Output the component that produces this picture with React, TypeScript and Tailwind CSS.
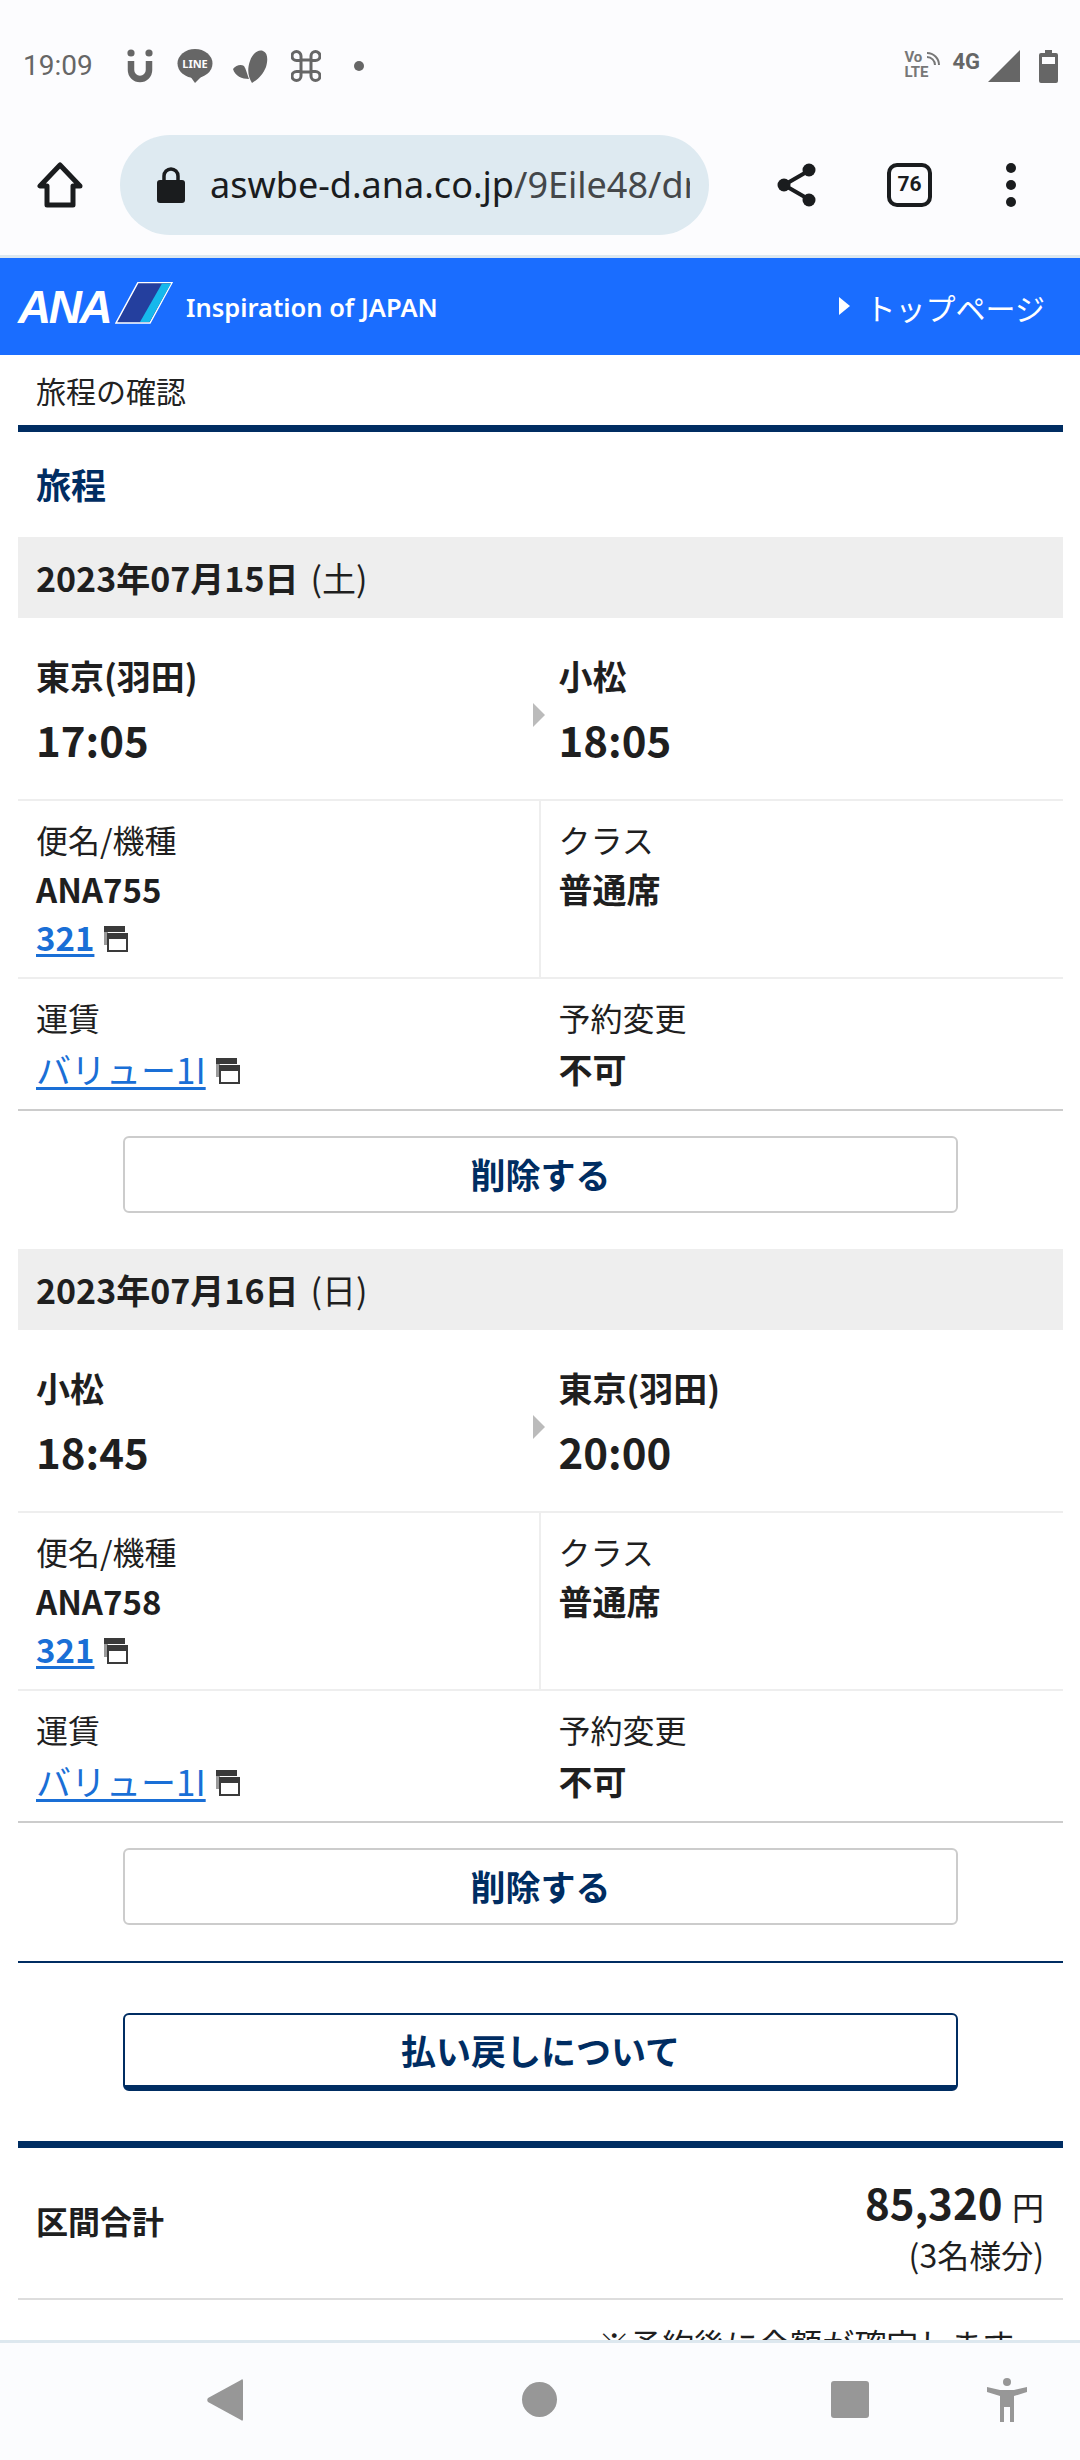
import React from "react"

const NAVY = "text-[#002d62]"

function ExternalIcon() {
  return (
    <svg width="26" height="26" viewBox="0 0 26 26" className="mt-[4px] inline-block shrink-0">
      <rect x="1" y="0" width="21" height="6" fill="#3a3a3a" />
      <rect x="1" y="6" width="4" height="13" fill="#9a9a9a" />
      <rect x="4" y="7" width="21" height="19" fill="#3a3a3a" />
      <rect x="6" y="13" width="17" height="11" fill="#fff" />
    </svg>
  )
}

function StatusBar() {
  return (
    <div className="flex h-[97px] items-center justify-between pl-[23px] pr-[22px] pt-[35px]">
      <div className="flex items-center">
        <span className="w-[104px] font-['Roboto'] text-[28px] leading-none text-[#666]">19:09</span>
        <svg width="26" height="34" viewBox="0 0 26 34">
          <circle cx="4" cy="4" r="3.6" fill="#666" />
          <circle cx="22" cy="4" r="3.6" fill="#666" />
          <path d="M4 12v9a9 9 0 0 0 18 0v-9" fill="none" stroke="#666" strokeWidth="6.5" />
        </svg>
        <svg width="36" height="34" viewBox="0 0 36 34" className="ml-[24px]">
          <ellipse cx="18" cy="14.5" rx="17.5" ry="14.5" fill="#666" />
          <path d="M13 27l12 0-7 7z" fill="#666" />
          <text x="18" y="19" textAnchor="middle" fontSize="11" fontWeight="700" fill="#fcfcfe" fontFamily="Noto Sans">LINE</text>
        </svg>
        <svg width="36" height="34" viewBox="0 0 36 34" className="ml-[20px]">
          <path d="M19 34C15 28 14 20 17 12 19 5 25 0 30 2c5 2 5 9 3 16-3 7-7 12-14 16zM0 20c3-4 8-5 11-3 2 3 3 8 5 13C9 30 2 27 0 20z" fill="#666" />
        </svg>
        <svg width="30" height="32" viewBox="0 0 30 32" className="ml-[22px]">
          <path d="M10 10h10v12H10zM10 10V6a4.500 4.500 0 1 0-4.500 4.500H10M20 10V6a4.500 4.500 0 1 1 4.500 4.500H20M10 22v4a4.500 4.500 0 1 1-4.500-4.500H10M20 22v4a4.500 4.500 0 1 0 4.500-4.500H20" fill="none" stroke="#666" strokeWidth="3" />
        </svg>
        <span className="ml-[33px] h-[10px] w-[10px] rounded-full bg-[#666]" />
      </div>
      <div className="flex items-center">
        <div className="relative h-[32px] w-[36px] font-['Roboto'] text-[15px] font-bold leading-[15px] text-[#777]">
          <div>Vo</div>
          <div>LTE</div>
          <svg width="14" height="14" viewBox="0 0 14 14" className="absolute right-0 top-[2px]">
            <path d="M1 5a8 8 0 0 1 8 8M1 1a12 12 0 0 1 12 12" fill="none" stroke="#777" strokeWidth="2" />
          </svg>
        </div>
        <span className="mb-[8px] ml-[12px] font-['Roboto'] text-[22px] font-bold leading-none text-[#666]">4G</span>
        <svg width="32" height="32" viewBox="0 0 32 32" className="ml-[8px]">
          <path d="M0 32L32 0v32z" fill="#666" />
        </svg>
        <svg width="19" height="33" viewBox="0 0 19 33" className="ml-[19px]">
          <path d="M6 0h7v3h4a2 2 0 0 1 2 2v26a2 2 0 0 1-2 2H2a2 2 0 0 1-2-2V5a2 2 0 0 1 2-2h4z" fill="#666" />
          <rect x="3" y="7" width="13" height="7" fill="#fcfcfe" />
        </svg>
      </div>
    </div>
  )
}

function Toolbar() {
  return (
    <div className="flex h-[161px] items-start border-b-[3px] border-[#dde8ef] pt-[38px]">
      <div className="flex h-[100px] w-[120px] items-center justify-center">
        <svg width="46" height="46" viewBox="0 0 46 46">
          <path d="M23 3L3 24h7v19h26V24h7z" fill="none" stroke="#1a1c1e" strokeWidth="5" strokeLinejoin="round" />
        </svg>
      </div>
      <div className="flex h-[100px] w-[589px] items-center rounded-full bg-[#deeaf1] pl-[37px] pr-[19px]">
        <svg width="28" height="36" viewBox="0 0 28 36" className="shrink-0">
          <path d="M7 15V9a7 7 0 0 1 14 0v6" fill="none" stroke="#1a1c1e" strokeWidth="3.500" />
          <rect x="0" y="13" width="28" height="23" rx="3" fill="#1a1c1e" />
        </svg>
        <div className="ml-[25px] overflow-hidden whitespace-nowrap font-['Noto_Sans'] text-[36px] leading-[48px] text-[#44474a]">
          <span className="text-[#1a1c1e]">aswbe-d.ana.co.jp</span>/9Eile48/dr
        </div>
      </div>
      <div className="flex h-[100px] flex-1 items-center">
        <svg width="40" height="44" viewBox="0 0 40 44" className="ml-[68px]">
          <path d="M33 7L7 22l26 15" fill="none" stroke="#1a1c1e" strokeWidth="4" />
          <circle cx="32" cy="7" r="6.500" fill="#1a1c1e" />
          <circle cx="7" cy="22" r="6.500" fill="#1a1c1e" />
          <circle cx="32" cy="37" r="6.500" fill="#1a1c1e" />
        </svg>
        <div className="ml-[70px] flex h-[44px] w-[45px] items-center justify-center rounded-[10px] border-[4px] border-[#1a1c1e] font-['Roboto'] text-[21px] font-bold text-[#1a1c1e]">
          76
        </div>
        <div className="ml-[74px] flex flex-col gap-[7px]">
          <span className="h-[10px] w-[10px] rounded-full bg-[#1a1c1e]" />
          <span className="h-[10px] w-[10px] rounded-full bg-[#1a1c1e]" />
          <span className="h-[10px] w-[10px] rounded-full bg-[#1a1c1e]" />
        </div>
      </div>
    </div>
  )
}

function BrandBar() {
  return (
    <div className="flex h-[97px] items-center justify-between bg-[#1a6dff] pl-[18px] pr-[35px] text-white">
      <div className="flex items-center">
        <span className="w-[96px] font-['Liberation_Sans'] text-[46px] font-bold italic leading-none tracking-[-2.5px]">ANA</span>
        <svg width="58" height="42" viewBox="0 0 58 42" className="mb-[8px] ml-[1px]">
          <path d="M23 0.500H57L35 41H1z" fill="#243f9e" stroke="#fff" strokeWidth="1.500" />
          <path d="M47 1.500H56L34.500 40H25z" fill="#16b8ec" />
        </svg>
        <span className="ml-[13px] mt-[3px] font-['Noto_Sans'] text-[25.5px] font-semibold leading-none">Inspiration of JAPAN</span>
      </div>
      <div className="flex items-center gap-[16px] text-[30px] leading-none">
        <svg width="11" height="18" viewBox="0 0 11 18" className="mb-[2px]">
          <path d="M0 0l11 9-11 9z" fill="#fff" />
        </svg>
        <span>トップページ</span>
      </div>
    </div>
  )
}

function Segment(props: {
  date: string
  day: string
  from: string
  to: string
  dep: string
  arr: string
  flight: string
}) {
  return (
    <div>
      <div className="flex h-[81px] items-center bg-[#eee] pl-[18px] text-[34px] font-bold text-[#1f1f1f]">
        {props.date}
        <span className="ml-[12px] font-normal">(</span>
        <span className="font-normal">{props.day}</span>
        <span className="font-normal">)</span>
      </div>

      {/* route */}
      <div className="relative grid h-[181px] grid-cols-2 pt-[35px] text-[#1f1f1f]">
        <div className="pl-[18px]">
          <div className="text-[34px] font-bold leading-[46px]">{props.from}</div>
          <div className="mt-[10px] text-[42px] font-bold leading-[60px]">{props.dep}</div>
        </div>
        <div className="pl-[18px]">
          <div className="text-[34px] font-bold leading-[46px]">{props.to}</div>
          <div className="mt-[10px] text-[42px] font-bold leading-[60px]">{props.arr}</div>
        </div>
        <svg width="12" height="24" viewBox="0 0 12 24" className="absolute left-[515px] top-[85px]">
          <path d="M0 0l12 12L0 24z" fill="#bbb" />
        </svg>
      </div>

      <div className="grid h-[178px] grid-cols-2 border-t-[2px] border-[#eee] text-[#1f1f1f]">
        <div className="border-r-[2px] border-[#eee] pl-[18px] pt-[15px]">
          <div className="text-[32px] leading-[46px]">便名/機種</div>
          <div className="mt-[4px] text-[33px] font-bold leading-[46px]">{props.flight}</div>
          <div className="mt-[2px] flex items-center gap-[9px] leading-[46px]">
            <a className="text-[33px] font-bold text-[#1a6fd6] underline decoration-[3px] underline-offset-[3px]">321</a>
            <ExternalIcon />
          </div>
        </div>
        <div className="pl-[18px] pt-[15px]">
          <div className="text-[32px] leading-[46px]">クラス</div>
          <div className="mt-[4px] text-[34px] font-bold leading-[46px]">普通席</div>
        </div>
      </div>

      <div className="grid h-[134px] grid-cols-2 border-y-[2px] border-b-[#ccc] border-t-[#eee] text-[#1f1f1f]">
        <div className="pl-[18px] pt-[15px]">
          <div className="text-[32px] leading-[46px]">運賃</div>
          <div className="mt-[6px] flex items-center gap-[9px] leading-[46px]">
            <a className="text-[35px] text-[#1a6fd6] underline decoration-[3px] underline-offset-[3px]">バリュー1I</a>
            <ExternalIcon />
          </div>
        </div>
        <div className="pl-[18px] pt-[15px]">
          <div className="text-[32px] leading-[46px]">予約変更</div>
          <div className="mt-[6px] text-[34px] font-bold leading-[46px]">不可</div>
        </div>
      </div>

      <div className="flex justify-center pb-[36px] pt-[25px]">
        <button className={`h-[77px] w-[835px] rounded-[6px] border-[2px] border-[#ccc] bg-white text-[35px] font-bold ${NAVY}`}>
          削除する
        </button>
      </div>
    </div>
  )
}

export default function App() {
  return (
    <div className="flex h-[2460px] w-[1080px] flex-col overflow-hidden bg-white font-['Noto_Sans_CJK_JP','Noto_Sans',sans-serif]">
      <div className="bg-[#fcfcfe]">
        <StatusBar />
        <Toolbar />
      </div>

      <div className="min-h-0 flex-1 overflow-hidden">
        <BrandBar />
        <div className="ml-[18px] mr-[17px]">
          <div className="flex h-[70px] items-center pl-[18px] text-[30px] text-[#222]">旅程の確認</div>
          <div className="h-[7px] bg-[#002d62]" />
          <h2 className={`flex h-[105px] items-center pl-[18px] text-[35px] font-bold ${NAVY}`}>旅程</h2>

          <Segment date="2023年07月15日" day="土" from="東京(羽田)" to="小松" dep="17:05" arr="18:05" flight="ANA755" />
          <Segment date="2023年07月16日" day="日" from="小松" to="東京(羽田)" dep="18:45" arr="20:00" flight="ANA758" />

          <div className="h-[2px] bg-[#002d62]" />
          <div className="flex justify-center py-[50px]">
            <button className={`h-[78px] w-[835px] rounded-[6px] border-[2px] border-b-[6px] border-[#002d62] bg-white text-[35px] font-bold ${NAVY}`}>
              払い戻しについて
            </button>
          </div>
          <div className="h-[7px] bg-[#002d62]" />

          <div className="flex h-[152px] items-center justify-between border-b-[2px] border-[#ddd] pl-[18px] pr-[19px] text-[#1f1f1f]">
            <div className="mb-[6px] text-[32px] font-bold">区間合計</div>
            <div className="text-right">
              <div className="text-[42px] font-bold leading-[58px]">
                85,320 <span className="text-[32px] font-normal">円</span>
              </div>
              <div className="text-[32px] leading-[38px]">(3名様分)</div>
            </div>
          </div>
          <div className="pr-[20px] pt-[20px] text-right text-[32px] leading-[46px] text-[#1f1f1f]">※予約後に金額が確定します。</div>
        </div>
      </div>

      {/* android nav bar */}
      <div className="flex h-[120px] shrink-0 items-start border-t-[3px] border-[#dde8ef] bg-[#fbfcfe] pt-[35px]">
        <svg width="36" height="42" viewBox="0 0 36 42" className="ml-[207px] mt-[1px]">
          <path d="M36 2v38c0 2-1 2-2 1L1 23c-1-1-1-3 0-4L34 1c1-1 2-1 2 1z" fill="#979797" />
        </svg>
        <span className="ml-[279px] mt-[4px] h-[35px] w-[35px] rounded-full bg-[#979797]" />
        <span className="ml-[274px] mt-[3px] h-[37px] w-[38px] rounded-[3px] bg-[#979797]" />
        <svg width="40" height="44" viewBox="0 0 40 44" className="ml-[118px]">
          <circle cx="20" cy="4" r="4" fill="#979797" />
          <path d="M0 9l13 3h14l13-3v5l-13 4v26h-4V29h-6v15h-4V18L0 14z" fill="#979797" />
        </svg>
      </div>
    </div>
  )
}
